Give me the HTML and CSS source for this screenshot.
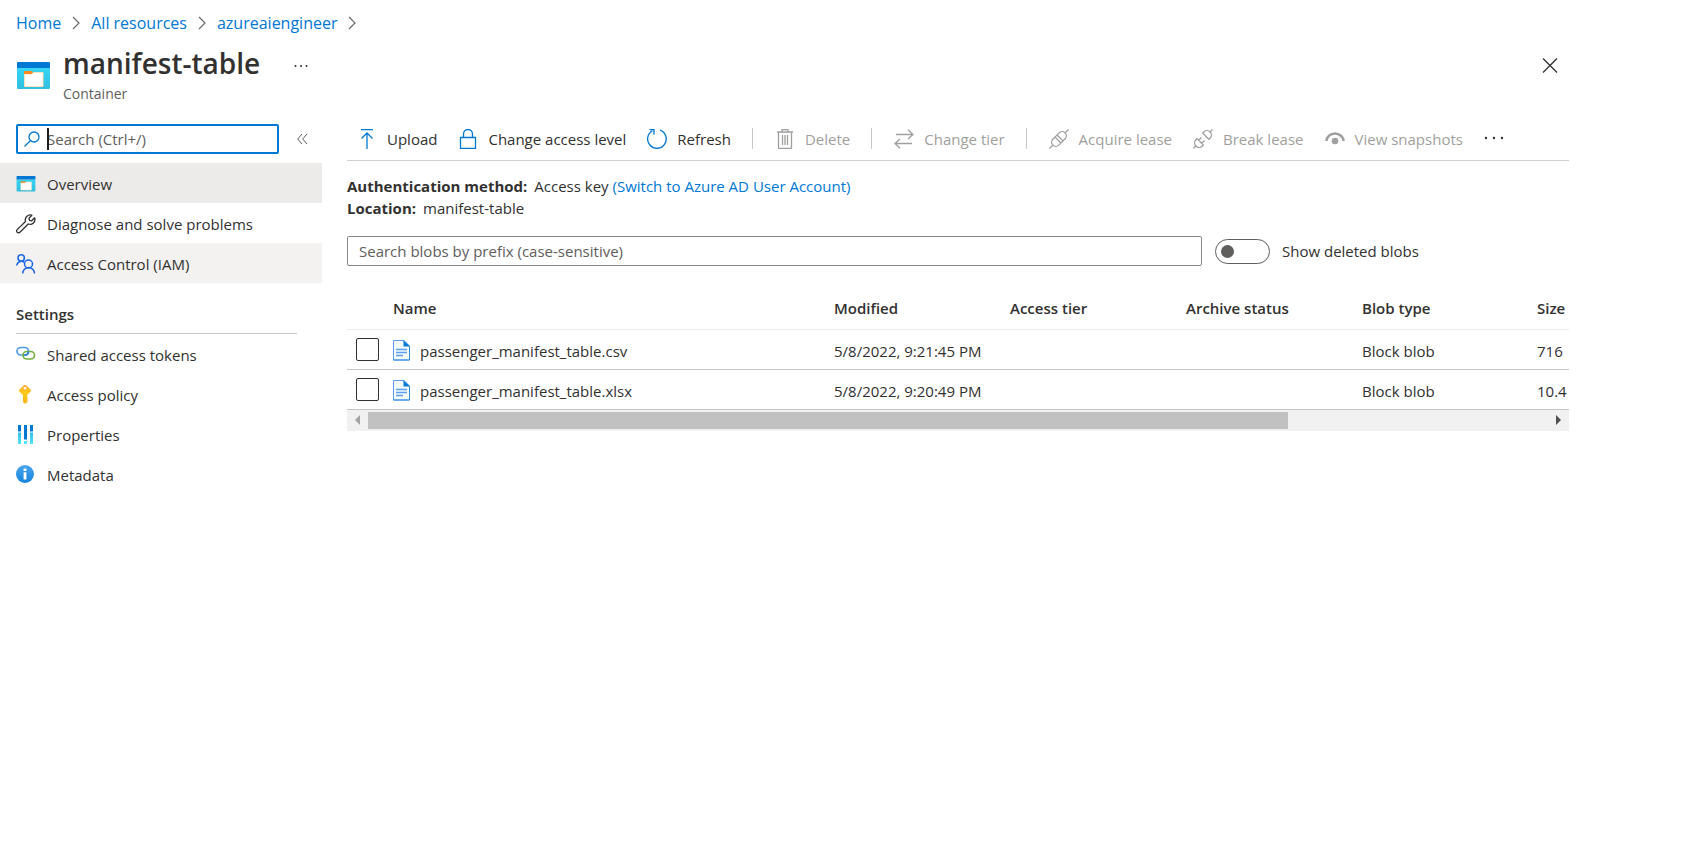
FILE: index.html
```html
<!DOCTYPE html>
<html lang="en">
<head>
<meta charset="utf-8">
<title>manifest-table - Container</title>
<link rel="stylesheet" href="styles.css">
</head>
<body>
<svg width="0" height="0" class="defs" aria-hidden="true">
  <defs>
    <linearGradient id="g-cyan" x1="0" y1="0" x2="0" y2="1"><stop offset="0" stop-color="#37d5f5"/><stop offset="1" stop-color="#32bedd"/></linearGradient>
    <linearGradient id="g-key" x1="0" y1="0" x2="0" y2="1"><stop offset="0" stop-color="#fea11b"/><stop offset=".4" stop-color="#ffca1f"/><stop offset="1" stop-color="#fbb517"/></linearGradient>
    <linearGradient id="g-info" x1="0" y1="0" x2="0" y2="1"><stop offset="0" stop-color="#4aa5ee"/><stop offset="1" stop-color="#1583dc"/></linearGradient>
    <linearGradient id="g-bar" x1="0" y1="0" x2="0" y2="1"><stop offset="0" stop-color="#32bedd"/><stop offset="1" stop-color="#50e6ff"/></linearGradient>
    <symbol id="i-container" viewBox="0 0 33 28">
      <path d="M0 6h33v19.500a1.500 1.500 0 0 1-1.500 1.500h-30A1.500 1.500 0 0 1 0 25.500z" fill="url(#g-cyan)"/>
      <path d="M1 0h31a1 1 0 0 1 1 1v5H0V1a1 1 0 0 1 1-1z" fill="#0078d4"/>
      <path d="M7.500 12H15l1.500-1.500h9.500v14H7.500z" fill="#fff" stroke="#ffe0b8" stroke-width="1"/>
      <path d="M8 9h6.500a1.500 1.500 0 0 1 1.500 1.500L14.500 12H7v-2a1 1 0 0 1 1-1z" fill="#f78d1e"/>
    </symbol>
    <symbol id="i-file" viewBox="0 0 18 21">
      <path d="M.5.5h10.500l5.500 5.500v14H.5z" fill="#f4f9fe" stroke="#5ea0ef"/>
      <path d="M.5 20h16V7" fill="none" stroke="#2f8be0"/>
      <path d="M10.500 0L17 6.500h-6.500z" fill="#0078d4"/>
      <path d="M3 9.500h11M3 12.500h11M3 15.500h7" stroke="#5ea0ef" stroke-width="1.500"/>
    </symbol>
    <symbol id="i-chev" viewBox="0 0 8 14"><path d="M1 1l6 6-6 6" fill="none" stroke="#6b6a69" stroke-width="1.200"/></symbol>
  </defs>
</svg>

<nav class="breadcrumb" aria-label="Breadcrumb">
  <a href="#">Home</a><svg class="chev"><use href="#i-chev"/></svg>
  <a href="#">All resources</a><svg class="chev"><use href="#i-chev"/></svg>
  <a href="#">azureaiengineer</a><svg class="chev"><use href="#i-chev"/></svg>
</nav>

<header class="header">
  <svg class="header-icon"><use href="#i-container"/></svg>
  <div class="heading">
    <h1>manifest-table</h1>
    <p>Container</p>
  </div>
  <button class="title-more" aria-label="More"><svg width="14" height="4" viewBox="0 0 14 4"><g fill="#323130"><circle cx="1.500" cy="2" r="1"/><circle cx="7" cy="2" r="1"/><circle cx="12.500" cy="2" r="1"/></g></svg></button>
  <button class="close" aria-label="Close"><svg width="16" height="16" viewBox="0 0 16 16"><path d="M1 .500l14 14M15 .5l-14 14" stroke="#323130" stroke-width="1.300"/></svg></button>
</header>

<div class="layout">
  <aside class="sidebar">
    <div class="side-search">
      <label class="side-field">
        <svg width="17" height="17" viewBox="0 0 17 17" fill="none" stroke="#0078d4" stroke-width="1.300"><circle cx="10" cy="6" r="5"/><path d="M6.500 9.500L.5 15.500"/></svg>
        <input type="text" placeholder="Search (Ctrl+/)" aria-label="Search menu">
      </label>
      <button class="collapse" aria-label="Collapse menu"><svg width="11" height="12" viewBox="0 0 11 12" fill="none" stroke="#605e5c"><path d="M5 1L.7 6 5 11M10 1L5.700 6 10 11"/></svg></button>
    </div>
    <a class="item selected" href="#"><svg width="19" height="16"><use href="#i-container"/></svg>Overview</a>
    <a class="item" href="#"><svg width="20" height="20" viewBox="0 0 20 20" fill="none" stroke="#323130" stroke-width="1.300" stroke-linejoin="round"><path d="M15.800 1.200a5 5 0 0 0-6.300 6.300L1.200 15.600a1.900 1.900 0 0 0 0 2.600 1.900 1.900 0 0 0 2.700 0l8.300-8.200a5 5 0 0 0 6.500-6.200l-3 3-2.200-.4-.5-2.200z"/></svg>Diagnose and solve problems</a>
    <a class="item hovered" href="#"><svg width="20" height="20" viewBox="0 0 20 20" fill="none" stroke="#1a66e0" stroke-width="1.500"><circle cx="5.200" cy="4" r="3.200"/><path d="M.7 11.500a4.700 4.700 0 0 1 7.500-3.200"/><circle cx="12.500" cy="10" r="4"/><path d="M6.700 19.500a5.900 5.900 0 0 1 11.800 0"/></svg>Access Control (IAM)</a>
    <h2>Settings</h2>
    <a class="item" href="#"><svg width="20" height="20" viewBox="0 0 20 20" fill="none" stroke-width="1.700"><rect x="1" y="2.500" width="11.500" height="7.500" rx="3.700" stroke="#4f9ae8"/><rect x="7" y="6.500" width="11.500" height="7.500" rx="3.700" stroke="#76b043"/><path d="M8 10h1.500a3.200 3.200 0 0 0 3-3.500" stroke="#2c7fd4"/></svg>Shared access tokens</a>
    <a class="item" href="#"><svg width="20" height="20" viewBox="0 0 20 20"><path d="M8 .2a1.600 1.600 0 0 1 2 0l4.500 4.300a1.500 1.500 0 0 1 0 2.200L11 10.300v.7l1 1-1 1 1 1-1 1 .8 1-1.800 2.500h-1.500L7 17v-6.700L3.500 6.700a1.500 1.500 0 0 1 0-2.200z" fill="url(#g-key)"/><circle cx="9" cy="3.200" r="1.400" fill="#fff"/></svg>Access policy</a>
    <a class="item" href="#"><svg width="20" height="20" viewBox="0 0 20 20"><path fill="#0078d4" d="M2 0h3v6.500H2zM8 0h3v14.500H8zM14 0h3v6.500h-3z"/><path fill="url(#g-bar)" d="M2 7.500h3V19H2zM14 7.500h3V19h-3z"/><path fill="#50e6ff" d="M8 16h3v3H8z"/></svg>Properties</a>
    <a class="item" href="#"><svg width="20" height="20" viewBox="0 0 20 20"><circle cx="9" cy="9" r="9" fill="url(#g-info)"/><path fill="#fff" d="M7.600 7.200h2.800v7.300H7.600zM7.600 3.500h2.800V6H7.600z"/></svg>Metadata</a>
  </aside>

  <main class="content">
    <div class="toolbar">
      <button><svg viewBox="0 0 20 20"><path d="M4 .6h12M10 20V4M4.500 9.500L10 4l5.500 5.500"/></svg>Upload</button>
      <button><svg viewBox="0 0 20 20"><path d="M2.500 8.500h15v11h-15zM5.500 8.500V5a4.500 4.500 0 0 1 9 0v3.500"/></svg>Change access level</button>
      <button><svg viewBox="0 0 20 20"><path d="M5.500 1.800A9.300 9.300 0 1 0 13 1.200M2.500.7h4.500v5"/></svg>Refresh</button>
      <span class="sep"></span>
      <button disabled><svg viewBox="0 0 20 20"><path d="M2 3h16M7 3V.6h6V3M3.500 3v15.500a1 1 0 0 0 1 1h11a1 1 0 0 0 1-1V3M7.500 6v10M10 6v10M12.500 6v10"/></svg>Delete</button>
      <span class="sep"></span>
      <button disabled><svg viewBox="0 0 20 20"><path d="M2 5.500h17M14 .7l5 4.800-5 4.500M18 14.500H1M6 10l-5 4.500 5 4.800"/></svg>Change tier</button>
      <span class="sep"></span>
      <button disabled><svg viewBox="0 0 20 20"><g transform="translate(10 10) rotate(-45)"><path d="M-13.500 0h4.500M9 0h4.500M-1.500 -4.500v9M1.500 -4.500v9M-4.500 -4.200h9a4.200 4.200 0 0 1 0 8.400h-9a4.200 4.200 0 0 1 0-8.400z"/></g></svg>Acquire lease</button>
      <button disabled><svg viewBox="0 0 20 20"><g transform="translate(10 10) rotate(-45)"><path d="M-13.500 0h3.500M10 0h3.500M-4 -5v10M4 -5v10M-4 -4.500h-1.500a4.500 4.500 0 0 0 0 9H-4M4 -4.500h1.500a4.500 4.500 0 0 1 0 9H4M-4 -2.200h4M-4 2.200h4"/></g></svg>Break lease</button>
      <button disabled><svg viewBox="0 0 20 20"><path class="thick" d="M1.500 12a8.500 7.500 0 0 1 17 0"/><circle class="fill" cx="10" cy="12" r="3.300"/></svg>View snapshots</button>
      <button class="more" aria-label="More commands"><svg viewBox="0 0 20 20"><g class="fill"><circle cx="2" cy="9" r="1.200"/><circle cx="10" cy="9" r="1.200"/><circle cx="18" cy="9" r="1.200"/></g></svg></button>
    </div>

    <dl class="info">
      <div><dt>Authentication method:</dt><dd>Access key <a href="#">(Switch to Azure AD User Account)</a></dd></div>
      <div><dt>Location:</dt><dd>manifest-table</dd></div>
    </dl>

    <div class="filter">
      <input class="blob-search" type="text" placeholder="Search blobs by prefix (case-sensitive)" aria-label="Search blobs by prefix">
      <label class="toggle"><input type="checkbox" role="switch">Show deleted blobs</label>
    </div>

    <div class="grid">
      <table>
        <colgroup><col class="c-check"><col><col class="c-mid"><col class="c-mid"><col class="c-mid"><col class="c-blob"><col class="c-size"></colgroup>
        <thead><tr><th></th><th>Name</th><th>Modified</th><th>Access tier</th><th>Archive status</th><th>Blob type</th><th>Size</th></tr></thead>
        <tbody>
          <tr><td class="pick"><input type="checkbox" aria-label="Select passenger_manifest_table.csv"></td><td><span class="file"><svg><use href="#i-file"/></svg>passenger_manifest_table.csv</span></td><td>5/8/2022, 9:21:45 PM</td><td></td><td></td><td>Block blob</td><td>716</td></tr>
          <tr><td class="pick"><input type="checkbox" aria-label="Select passenger_manifest_table.xlsx"></td><td><span class="file"><svg><use href="#i-file"/></svg>passenger_manifest_table.xlsx</span></td><td>5/8/2022, 9:20:49 PM</td><td></td><td></td><td>Block blob</td><td>10.4</td></tr>
        </tbody>
      </table>
      <div class="scrollbar">
        <button aria-label="Scroll left"><svg width="5" height="10" viewBox="0 0 5 10"><path d="M5 0v10L0 5z" fill="#a3a3a3"/></svg></button>
        <div class="track"><div class="thumb"></div></div>
        <button aria-label="Scroll right"><svg width="5" height="10" viewBox="0 0 5 10"><path d="M0 0v10l5-5z" fill="#505050"/></svg></button>
      </div>
    </div>
  </main>
</div>
</body>
</html>
```
FILE: styles.css
```css
* { box-sizing: border-box; }

body {
  margin: 0;
  background: #fff;
  color: #323130;
  font: 15px/22px "Open Sans", "Noto Sans", sans-serif;
}

a { color: #0078d4; text-decoration: none; }
svg { flex: none; }
.defs { position: absolute; }

button {
  padding: 0;
  border: 0;
  background: none;
  color: inherit;
  font: inherit;
  display: flex;
  align-items: center;
}

input { font: inherit; color: inherit; }
input::placeholder { color: #605e5c; opacity: 1; }

.breadcrumb {
  display: flex;
  align-items: center;
  gap: 11px;
  padding: 12px 16px 0;
  font-size: 16px;
}
.chev { width: 8px; height: 14px; }

.header {
  display: flex;
  align-items: flex-start;
  padding: 10px 128px 0 17px;
}
.header-icon { width: 33px; height: 28px; margin-top: 18px; }
.heading { margin-left: 13px; }
.heading h1 { margin: 0; font-size: 28px; line-height: 38px; font-weight: 600; }
.heading p { margin: 0; font-size: 14px; line-height: 24px; color: #605e5c; }
.title-more { height: 44px; margin-left: 34px; }
.close { height: 44px; margin-left: auto; }

.layout { display: flex; align-items: flex-start; }

.sidebar { width: 322px; flex: none; padding-top: 18px; }
.side-search { display: flex; align-items: center; gap: 18px; padding-left: 16px; margin-bottom: 9px; }
.side-field {
  position: relative;
  display: flex;
  align-items: center;
  width: 263px;
  height: 30px;
  padding-left: 6px;
  border: 2px solid #0078d4;
  border-radius: 2px;
}
.side-field::after {
  content: "";
  position: absolute;
  left: 29px;
  top: 2px;
  width: 2px;
  height: 22px;
  background: #201f1e;
}
.side-field input { flex: 1; min-width: 0; margin-left: 6px; padding: 0; border: 0; outline: 0; background: none; }

.item {
  display: flex;
  align-items: center;
  gap: 11px;
  height: 40px;
  padding: 2px 0 0 16px;
  color: #323130;
}
.item svg { width: 20px; }
.selected { background: #edebe9; }
.hovered { background: #f3f2f1; }
.sidebar h2 {
  margin: 20px 25px 0 16px;
  padding-bottom: 8px;
  border-bottom: 1px solid #c8c6c4;
  font-size: 15px;
  font-weight: 600;
}

.content { flex: 1; min-width: 0; margin: 18px 117px 0 25px; }

.toolbar {
  display: flex;
  align-items: center;
  height: 37px;
  padding: 0 0 7px 10px;
  border-bottom: 1px solid #d2d0ce;
  white-space: nowrap;
}
.toolbar button { gap: 10px; margin-right: 21px; }
.toolbar svg { width: 20px; height: 20px; fill: none; stroke: #0078d4; stroke-width: 1.300; }
.toolbar button:disabled { color: #a19f9d; }
.toolbar button:disabled svg { stroke: #a19f9d; }
.toolbar .thick { stroke-width: 2.500; }
.toolbar .fill { fill: #a19f9d; stroke: none; }
.toolbar .more .fill { fill: #323130; }
.sep { width: 1px; height: 21px; margin-right: 22px; background: #c8c6c4; }

.info { margin: 14px 0 17px; }
.info div { display: flex; gap: 7px; }
.info dt { font-weight: 700; }
.info dd { margin: 0; }

.filter { display: flex; align-items: center; gap: 13px; }
.blob-search {
  flex: 1;
  min-width: 0;
  height: 30px;
  padding: 0 11px;
  border: 1px solid #8a8886;
  border-radius: 2px;
}
.toggle { display: flex; align-items: center; gap: 12px; width: 354px; }
.toggle input {
  appearance: none;
  display: flex;
  align-items: center;
  width: 55px;
  height: 25px;
  margin: 0;
  padding: 0 5px;
  border: 1px solid #605e5c;
  border-radius: 13px;
}
.toggle input::before { content: ""; width: 13px; height: 13px; border-radius: 50%; background: #605e5c; }

.grid { margin-top: 20px; overflow: hidden; }
table { width: 100%; table-layout: fixed; border-collapse: collapse; }
.c-check { width: 46px; }
.c-mid { width: 176px; }
.c-blob { width: 175px; }
.c-size { width: 32px; }
th, td { height: 40px; padding: 2px 0 0; text-align: left; font-weight: 400; white-space: nowrap; border-bottom: 1px solid #c8c6c4; }
th { height: 43px; font-weight: 600; border-bottom-color: #edebe9; }
td { padding-top: 3px; }
.pick { padding: 0 0 0 9px; }
.pick input {
  appearance: none;
  display: block;
  width: 23px;
  height: 23px;
  margin: 0;
  border: 1px solid #323130;
  border-radius: 2px;
}
.file { display: flex; align-items: center; gap: 9px; }
.file svg { width: 18px; height: 21px; }

.scrollbar { display: flex; height: 21px; background: #f1f1f1; }
.scrollbar button { width: 21px; justify-content: center; }
.track { flex: 1; padding: 2px 0; }
.thumb { width: 78%; height: 17px; background: #c1c1c1; }
```
